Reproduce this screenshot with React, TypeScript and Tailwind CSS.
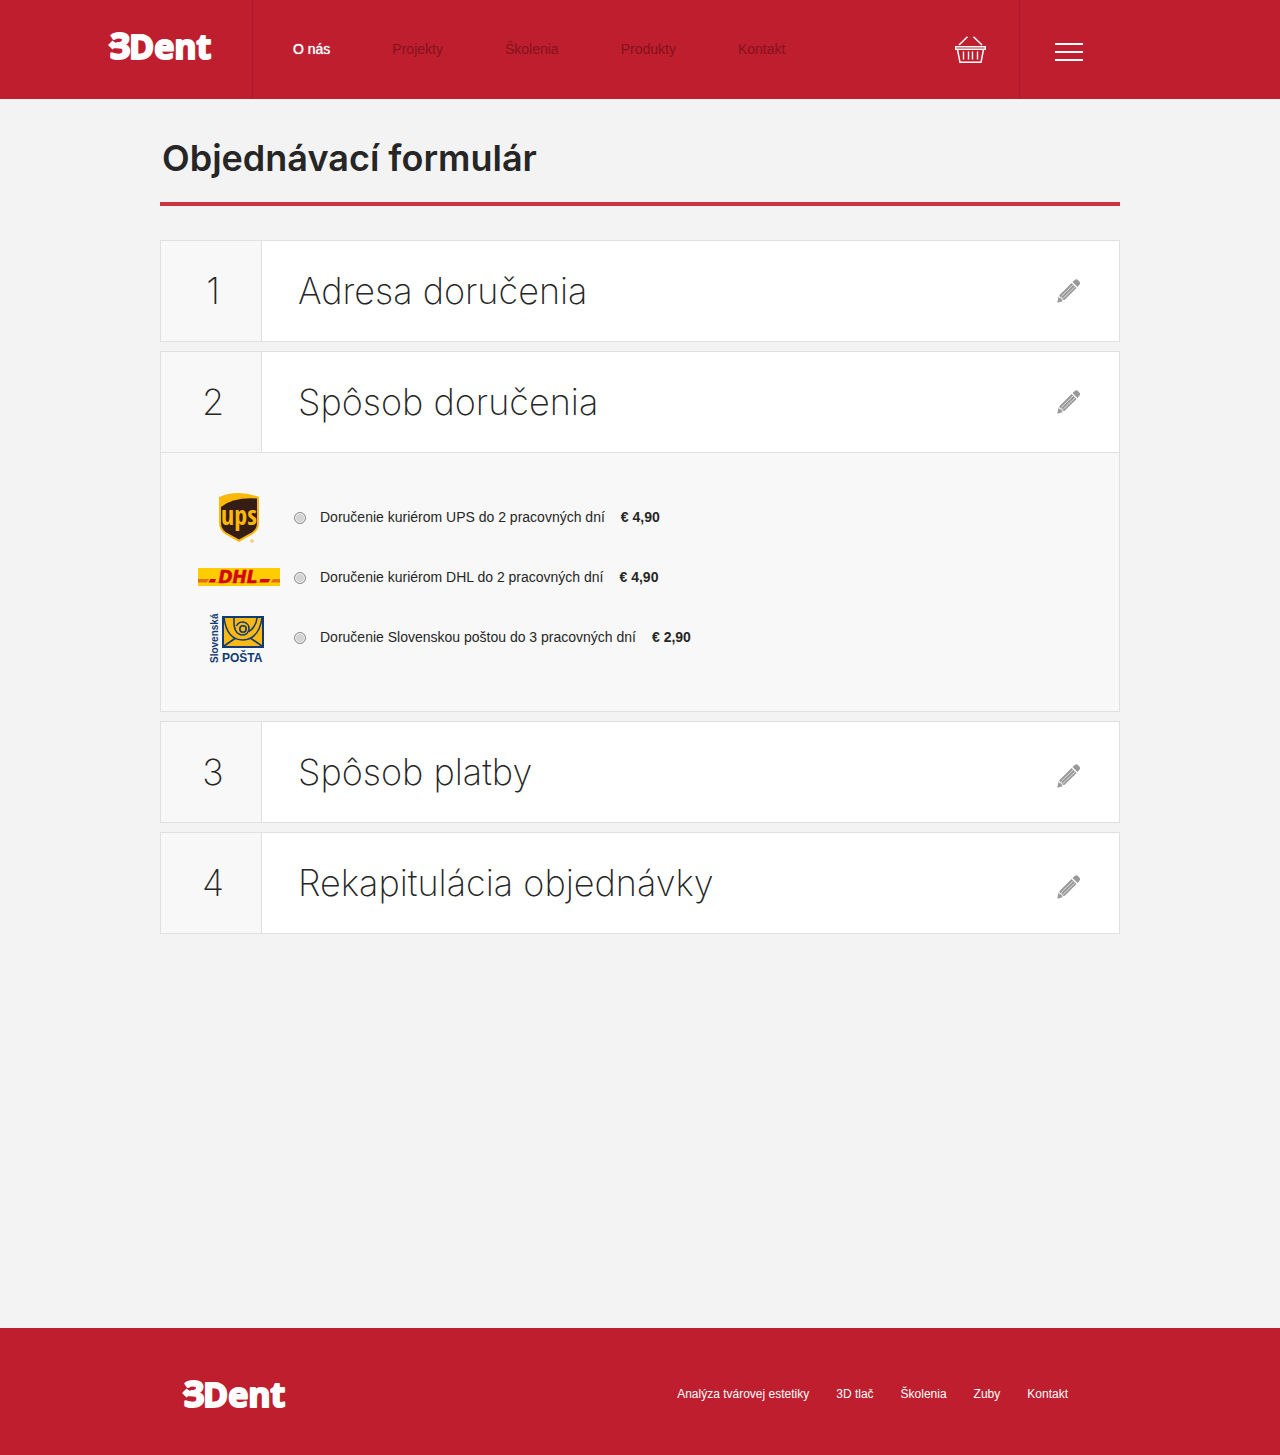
import { useState } from "react";
import type { ReactNode } from "react";

function Logo() {
  return (
    <svg width="106" height="34" viewBox="0 0 106 34" role="img" aria-label="3Dent" className="block overflow-visible">
      <g
        fill="#fff"
        stroke="#fff"
        strokeWidth="2"
        strokeLinejoin="round"
        fontFamily='"Open Sans", sans-serif'
        fontWeight="700"
      >
        <text x="2" y="30" fontSize="36">3</text>
        <text x="21" y="30" fontSize="34">Dent</text>
      </g>
      <path d="M1 10.500 7.500 11.500 9 15 4.500 11.500-1 17 4.500 22.500 9 19.500 7.500 23 1 23.500Z" fill="#be1e2d" />
      <path d="M0 16 4.500 11.500 8 14.200H13V17.800H8L4.500 20.500Z" fill="#fff" />
    </svg>
  );
}

function BasketIcon() {
  return (
    <svg width="32" height="28" viewBox="0 0 32 28" fill="none" stroke="#fff" className="block">
      <path d="M4 9 12.500 .8M18.500 .8 27 9" strokeWidth="1.500" />
      <path d="M.700 10.700H30.300V13.300H.700Z" strokeWidth="1.400" />
      <path d="M2.500 13.500 5 26.300H26L28.500 13.500" strokeWidth="1.500" />
      <path d="M8.500 15.500V23.500M13.500 15.500V23.500M17.500 15.500V23.500M22.500 15.500V23.500" strokeWidth="1.400" />
    </svg>
  );
}

function PencilIcon() {
  return (
    <svg width="24" height="24" viewBox="0 0 24 24" fill="#999" className="block">
      <path d="M15.500 3 18 .7Q19.300-.3 20.700.7L22.500 2.700Q23.700 4.200 22.500 5.600L20.500 7.900Z" />
      <path d="M14.600 3.900 19.600 8.900 7.400 21.100 5.600 20.700 5.200 18.600 3 18.200 2.300 16.200Z" />
      <path d="M1.600 17.200 2.300 19 4.500 19.400 4.900 21.500 6.400 22 .3 23.700Z" />
      <path d="M4.300 17.400 16.300 5.700M6.200 19.300 18.200 7.600" stroke="#fff" strokeWidth=".7" />
    </svg>
  );
}

function UpsLogo() {
  return (
    <svg width="42" height="52" viewBox="0 0 42 52" role="img" aria-label="UPS" className="block overflow-visible">
      <path d="M1 6Q20-2 41 6V32Q41 39 35 43L21 51 7 43Q1 39 1 32Z" fill="#fab80a" />
      <path d="M3 16Q15 6 39 7.500V32Q39 38 34 41.300L21 48.600 8 41.300Q3 38 3 32Z" fill="#351c15" />
      <text
        x="21"
        y="34"
        fontSize="26"
        fontWeight="700"
        textAnchor="middle"
        fontFamily='"Open Sans Condensed", "Liberation Sans Narrow", Roboto, sans-serif'
        fill="#fab80a"
      >
        ups
      </text>
      <circle cx="34" cy="50" r="1.300" fill="#fbe3b0" stroke="#f5c26b" />
    </svg>
  );
}

function DhlLogo() {
  return (
    <svg width="82" height="18" viewBox="0 0 82 18" role="img" aria-label="DHL" className="block overflow-visible">
      <path d="M0 0H82V18H0Z" fill="#fc0" />
      <path d="M0 11H11L8.800 14.500H0ZM75 11H82V14.500H72.800Z" fill="#e0701c" />
      <path d="M12.500 11H72.500L70.300 14.500H10.300Z" fill="#d40511" />
      <path d="M20 3H64L61.500 14.500H17Z" fill="#fc0" />
      <text
        x="40"
        y="14.500"
        fontSize="17"
        fontWeight="700"
        fontStyle="italic"
        textAnchor="middle"
        fontFamily='"DejaVu Sans", sans-serif'
        fill="#d40511"
        stroke="#d40511"
        strokeWidth=".5"
      >
        DHL
      </text>
    </svg>
  );
}

function PostaLogo() {
  return (
    <svg width="58" height="48" viewBox="0 -2 58 48" role="img" aria-label="Slovenská pošta" className="block overflow-visible">
      <g fill="#123a73" fontFamily='"Liberation Sans", sans-serif' fontWeight="700">
        <text transform="translate(8 48) rotate(-90)" fontSize="10">Slovenská</text>
        <text x="12" y="47" fontSize="12">POŠTA</text>
      </g>
      <path d="M13 2H53V32H13Z" fill="#fdb913" />
      <g fill="none" stroke="#123a73" strokeWidth="1.600">
        <path d="M13 2H53V32H13Z" strokeWidth="2" />
        <path d="M14 31 25 23.500M52 31 41 23.500" />
        <path d="M14 3Q17 25 33 25 49 24 52 3" />
        <path d="M24 3Q23 20 33 20A6.500 6.500 0 1 0 26.500 11" />
        <circle cx="33" cy="14" r="3.200" />
        <path d="M39 16.500Q46 12 47 3" />
      </g>
    </svg>
  );
}

type StepProps = { number: number; title: string; lowIcon?: boolean; children?: ReactNode };

function Step({ number, title, lowIcon, children }: StepProps) {
  return (
    <section className="border border-[#e0e0e0] bg-[#f8f8f8] text-[#262626]">
      <div className="flex h-[100px] items-stretch text-[36px] font-extralight leading-[44px]">
        <div className="flex w-[101px] shrink-0 items-center justify-center border-r border-[#e0e0e0] pl-1">{number}</div>
        <div className="flex flex-1 items-center justify-between bg-white pl-9 pr-[38px]">
          <h2>{title}</h2>
          <button type="button" aria-label={`Upraviť: ${title}`} className={lowIcon ? "pt-2" : ""}>
            <PencilIcon />
          </button>
        </div>
      </div>
      {children}
    </section>
  );
}

const nav = ["O nás", "Projekty", "Školenia", "Produkty", "Kontakt"];
const footerLinks = ["Analýza tvárovej estetiky", "3D tlač", "Školenia", "Zuby", "Kontakt"];
const carriers = [
  { id: "ups", logo: <UpsLogo />, label: "Doručenie kuriérom UPS do 2 pracovných dní", price: "€ 4,90" },
  { id: "dhl", logo: <DhlLogo />, label: "Doručenie kuriérom DHL do 2 pracovných dní", price: "€ 4,90" },
  { id: "posta", logo: <PostaLogo />, label: "Doručenie Slovenskou poštou do 3 pracovných dní", price: "€ 2,90" },
];

export default function App() {
  const [carrier, setCarrier] = useState("");

  return (
    <div className="flex min-h-screen flex-col bg-[#f3f3f3] font-['Inter',sans-serif]">
      <header className="flex h-[99px] bg-[#be1e2d] font-['Liberation_Sans',sans-serif] text-sm">
        <div className="w-[253px] shrink-0 border-r border-[#a91c29] pl-[108px] pt-[29px]">
          <a href="#" className="inline-block"><Logo /></a>
        </div>
        <nav className="flex flex-1 items-center gap-[62px] pb-0.5 pl-10">
          {nav.map((item, i) => (
            <a
              key={item}
              href="#"
              className={i === 0 ? "text-white [text-shadow:0_0_1px_#fff]" : "text-[#84131e]"}
            >
              {item}
            </a>
          ))}
        </nav>
        <button type="button" aria-label="Košík" className="px-8"><BasketIcon /></button>
        <div className="flex w-[261px] items-center border-l border-[#a91c29] pl-[35px] pt-1">
          <button type="button" aria-label="Menu" className="flex w-7 flex-col gap-1.5">
            <span className="h-0.5 w-full bg-white" />
            <span className="h-0.5 w-full bg-white" />
            <span className="h-0.5 w-full bg-white" />
          </button>
        </div>
      </header>

      <main className="mx-auto w-full max-w-[960px] pb-16">
        <h1 className="border-b-4 border-[#cc3341] pb-[22px] pl-0.5 pt-[37px] text-[36px] font-semibold leading-[44px] text-[#262626]">
          Objednávací formulár
        </h1>
        <div className="mt-[34px] flex flex-col gap-[9px]">
          <Step number={1} title="Adresa doručenia" />
          <Step number={2} title="Spôsob doručenia">
            <fieldset className="border-t border-[#e0e0e0] pb-11 pl-[37px] pt-[34px] font-['Liberation_Sans',sans-serif] text-sm">
              <legend className="sr-only">Možnosti doručenia</legend>
              {carriers.map((c) => (
                <label key={c.id} className="flex h-[60px] items-center">
                  <span className="flex w-[82px] justify-center">{c.logo}</span>
                  <input
                    type="radio"
                    name="carrier"
                    checked={carrier === c.id}
                    onChange={() => setCarrier(c.id)}
                    className="mx-3.5 mt-0.5 size-3 appearance-none rounded-full border border-[#8c8c8c] bg-[#d4d4d4] shadow-[inset_0_0_0_1px_#f4f4f4] checked:bg-[#444]"
                  />
                  <span>{c.label}</span>
                  <strong className="ml-4">{c.price}</strong>
                </label>
              ))}
            </fieldset>
          </Step>
          <Step number={3} title="Spôsob platby" lowIcon />
          <Step number={4} title="Rekapitulácia objednávky" lowIcon />
        </div>
      </main>

      <footer className="mt-auto bg-[#be1e2d]">
        <div className="mx-auto flex h-[127px] w-full max-w-[960px] items-center justify-between pl-[22px] pr-[52px] pt-1">
          <a href="#"><Logo /></a>
          <nav className="flex gap-[27px] font-['Liberation_Sans',sans-serif] text-xs text-white">
            {footerLinks.map((item) => (
              <a key={item} href="#">{item}</a>
            ))}
          </nav>
        </div>
      </footer>
    </div>
  );
}
